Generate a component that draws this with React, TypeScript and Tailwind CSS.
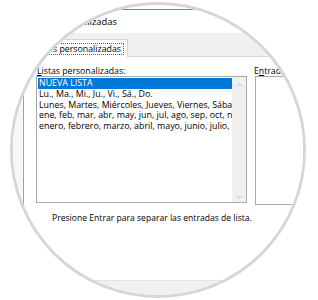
export default function App() {
  const rows = [
    "Lu., Ma., Mi., Ju., Vi., Sá., Do.",
    "Lunes, Martes, Miércoles, Jueves, Viernes, Sábado, Domingo",
    "ene, feb, mar, abr, may, jun, jul, ago, sep, oct, nov, dic",
    "enero, febrero, marzo, abril, mayo, junio, julio, agosto, septiembre",
  ];
  return (
    <div className="w-[318px] h-[300px] bg-white pl-[10px] pt-[2px] font-['Open_Sans',sans-serif] font-medium text-black">
      <div className="w-[296px] h-[296px] rounded-full border-[3px] border-[#d6d6d6] overflow-hidden bg-white">
        <div className="w-[318px] h-[300px] -ml-[13px] -mt-[5px] flex flex-col">
          <div className="h-[9px] shrink-0 bg-white" />
          <div className="h-px shrink-0 bg-[#5b8ba5]" />
          <div className="h-[23px] shrink-0 bg-white flex items-center">
            <div className="w-[117px] shrink-0 text-right text-[9.4px] leading-[12px] whitespace-nowrap">
              Listas personalizadas
            </div>
          </div>
          <div className="h-[24px] shrink-0 bg-[#f0f0f0] flex items-end">
            <div className="w-[128px] shrink-0 h-[18px] bg-white border-t border-r border-[#d4d4d4] flex items-center justify-end pr-[3px]">
              <div className="h-[12px] border border-dotted border-[#606060] px-[2px] flex items-center text-[8.8px] leading-[10px] whitespace-nowrap">
                Listas personalizadas
              </div>
            </div>
            <div className="flex-1 h-full border-b border-[#dadada]" />
          </div>
          <div className="h-[223px] shrink-0 flex bg-white">
            <div className="w-[23px] shrink-0 h-[151px] bg-[#f7f7f7]" />
            <div className="w-px shrink-0 h-[151px] bg-[#7fa7cf]" />
            <div className="w-[294px] shrink-0 flex flex-col pl-[12px] pt-[9px] text-[8.7px]">
              <div className="flex items-start">
                <div className="w-[211px] shrink-0 flex flex-col">
                  <div className="h-[10px] leading-[10px] pl-px whitespace-nowrap">
                    <span className="underline underline-offset-1">L</span>istas personalizadas:
                  </div>
                  <div className="h-[127px] border border-[#a9a9a9] flex text-[8.85px]">
                    <div className="w-[195px] shrink-0 pl-px pt-px flex flex-col">
                      <div className="h-[10.8px] leading-[10.8px] bg-[#0078d7] text-white px-px whitespace-nowrap overflow-hidden">
                        NUEVA LISTA
                      </div>
                      {rows.map((r) => (
                        <div key={r} className="h-[10.8px] leading-[10.8px] px-px whitespace-nowrap overflow-hidden">
                          {r}
                        </div>
                      ))}
                    </div>
                    <div className="w-[14px] shrink-0 h-full bg-[#f0f0f0] flex flex-col items-center justify-between pt-[6px] pb-[3px]">
                      <svg width="7" height="4" viewBox="0 0 7 4">
                        <path d="M0.5 3.5 L3.5 0.7 L6.5 3.5" fill="none" stroke="#c2c2c2" strokeWidth="1" />
                      </svg>
                      <svg width="7" height="4" viewBox="0 0 7 4">
                        <path d="M0.5 0.5 L3.5 3.3 L6.5 0.5" fill="none" stroke="#c2c2c2" strokeWidth="1" />
                      </svg>
                    </div>
                  </div>
                </div>
                <div className="ml-[7px] shrink-0 flex flex-col">
                  <div className="h-[10px] leading-[10px] whitespace-nowrap">
                    E<span className="underline underline-offset-1">n</span>tradas de lista:
                  </div>
                  <div className="ml-px w-[50px] h-[129px] border border-[#a9a9a9] bg-white" />
                </div>
              </div>
              <div className="mt-[8px] pl-[16px] h-[10px] leading-[10px] whitespace-nowrap text-[8.6px]">
                Presione Entrar para separar las entradas de lista.
              </div>
            </div>
          </div>
          <div className="flex-1 bg-[#f0f0f0] border-t border-[#e3e3e3]" />
        </div>
      </div>
    </div>
  );
}
